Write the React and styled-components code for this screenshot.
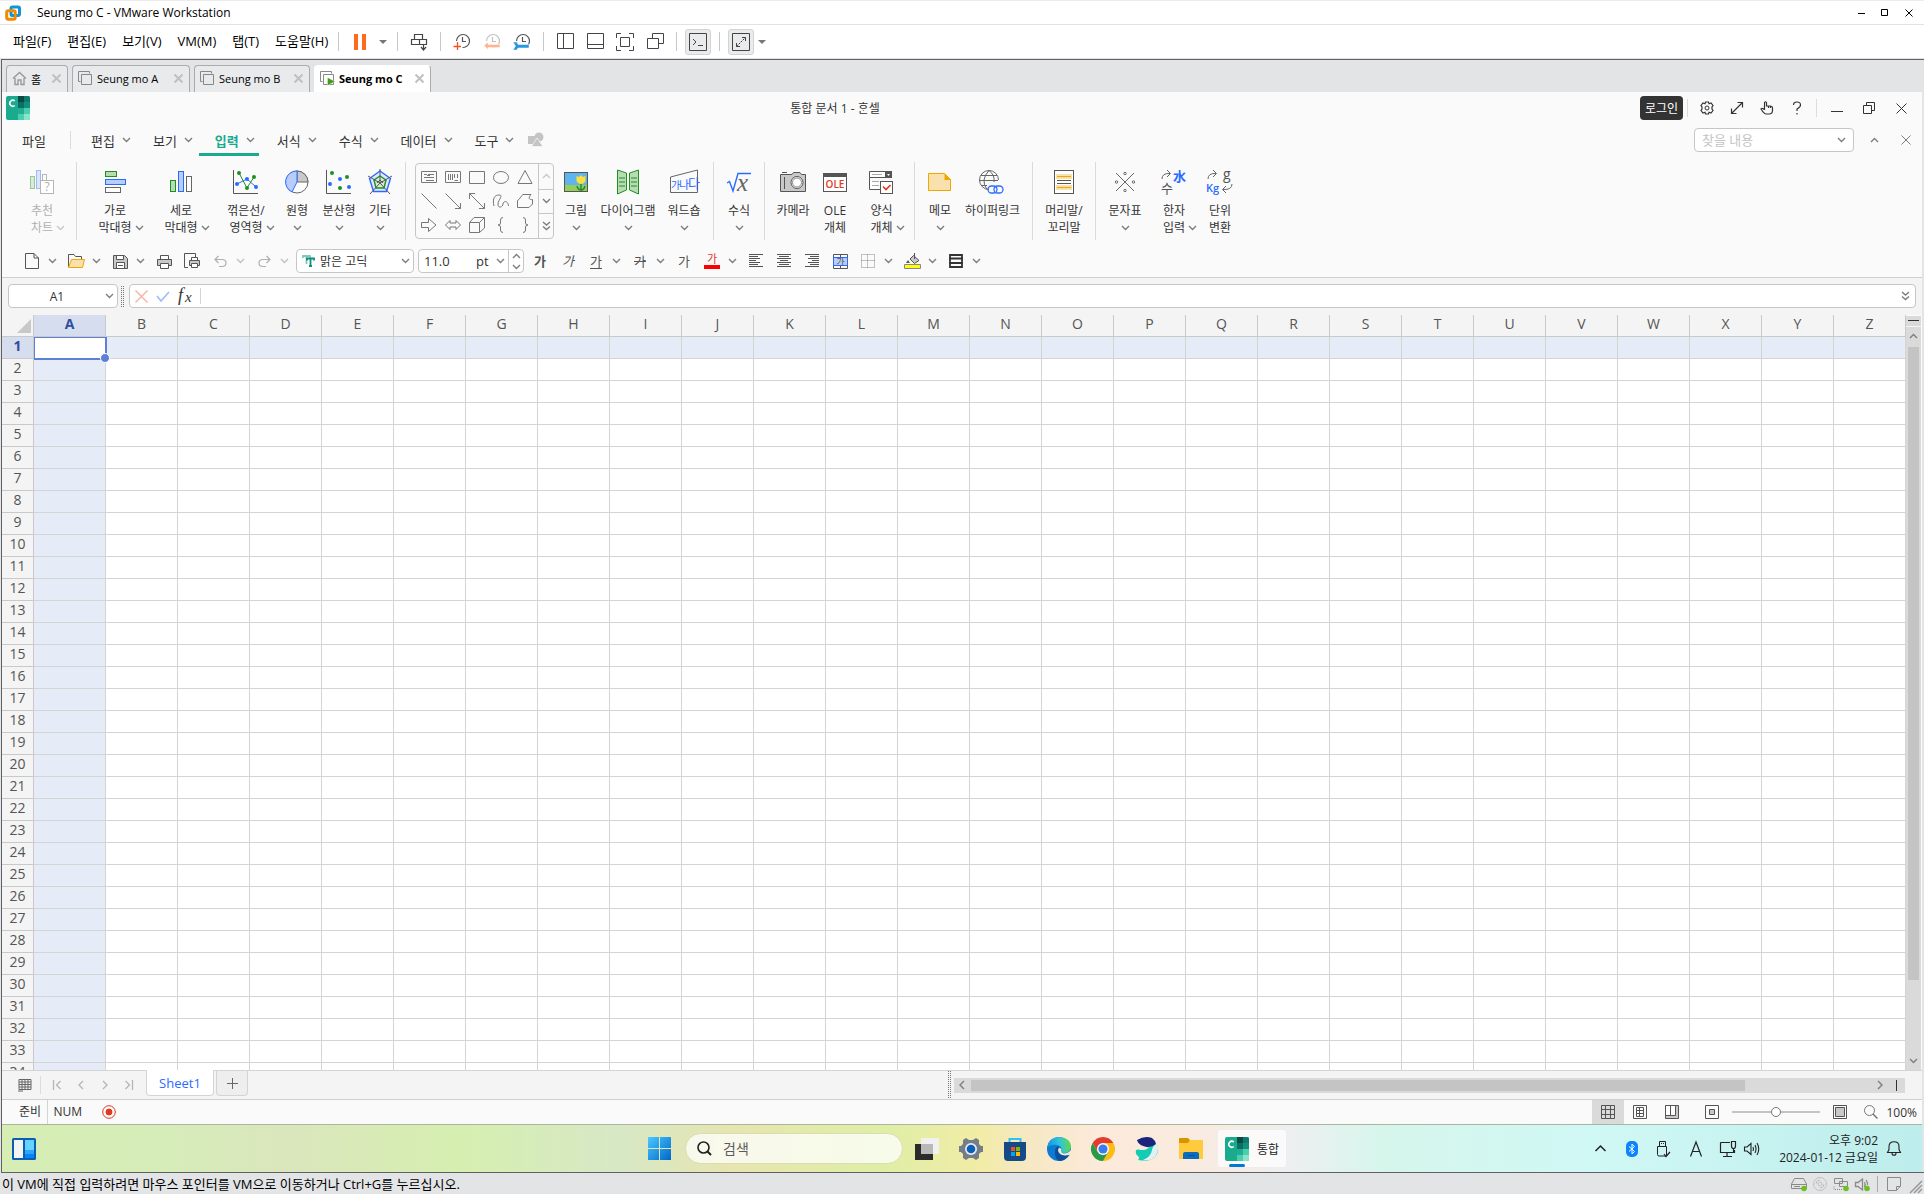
import styled, { createGlobalStyle, css } from 'styled-components'

const GlobalStyle = createGlobalStyle`
  * {
    box-sizing: border-box;
  }

  body {
    margin: 0;
    background: #e3e4e6;
    color: #000;
    font-family: 'Open Sans', 'Noto Sans CJK KR', sans-serif;
    font-size: 12px;
  }

  button,
  input,
  select {
    font: inherit;
    color: inherit;
    margin: 0;
    padding: 0;
    border: none;
    background: transparent;
    outline: none;
  }

  button {
    display: flex;
    align-items: center;
    justify-content: center;
  }
`

/* ---------- shared pieces ---------- */

const Svg = styled.svg`
  display: block;
  flex: none;
  overflow: visible;

  text {
    stroke: none;
    fill: currentColor;
  }
`

const Icon = ({ w = 16, h = w, children, ...rest }) => (
  <Svg width={w} height={h} viewBox={`0 0 ${w} ${h}`} fill="none" stroke="currentColor" aria-hidden="true" {...rest}>
    {children}
  </Svg>
)

const Chevron = ({ up, color = '#7d7d7d' }) => (
  <Icon w={9} h={6} color={color}>
    <path d={up ? 'M1 5L4.500 1.500L8 5' : 'M1 1L4.500 4.500L8 1'} strokeWidth="1.400" />
  </Icon>
)

const DoubleChevron = () => (
  <Icon w={9} h={10} color="#7d7d7d">
    <path d="M1 1L4.500 4L8 1M1 5.500L4.500 8.500L8 5.500" strokeWidth="1.400" />
  </Icon>
)

const Caret = () => (
  <Icon w={8} h={4}>
    <path d="M0 0H8L4 4Z" fill="#777" stroke="none" />
  </Icon>
)

const Cross = ({ size = 10, color = '#333', weight = 1 }) => (
  <Icon w={size} color={color}>
    <path d={`M.5 .5L${size - 0.5} ${size - 0.5}M${size - 0.5} .5L.5 ${size - 0.5}`} strokeWidth={weight} />
  </Icon>
)

const Spacer = styled.div`
  flex: 1;
`

const Screen = styled.div`
  display: flex;
  flex-direction: column;
  height: 100vh;
  overflow: hidden;
`

/* ---------- VMware window ---------- */

const TitleBar = styled.header`
  display: flex;
  align-items: center;
  height: 25px;
  padding: 0 3px 0 5px;
  background: #fff;
  border-top: 1px solid #ececec;
  border-bottom: 1px solid #e2e2e2;
`

const WindowTitle = styled.h1`
  flex: 1;
  margin: 0 0 0 16px;
  font-size: 12px;
  font-weight: 400;
`

const CaptionButton = styled.button`
  width: ${(props) => props.$width || 24}px;
  height: 24px;
`

const VmToolbar = styled.nav`
  display: flex;
  align-items: center;
  height: 34px;
  padding-left: 5px;
  background: #fff;
  border-bottom: 1px solid #e2e2e2;
`

const VmMenus = styled.div`
  display: flex;
  flex: none;
  width: 334px;
  border-right: 1px solid #c8c8c8;
  margin-right: 6px;
  font-size: 13px;
`

const VmMenu = styled.button`
  padding: 0 8px;
  line-height: 19px;
  white-space: nowrap;
`

const VmButton = styled.button`
  width: ${(props) => props.$width || 30}px;
  height: 28px;
  color: #444;
`

const Pressed = styled.span`
  display: flex;
  align-items: center;
  justify-content: center;
  width: 26px;
  height: 26px;
  background: #eaebec;
  border: 1px solid #d3d3d3;
  border-radius: 3px;
`

const VmSeparator = styled.span`
  width: 1px;
  height: 19px;
  margin: 0 6px;
  background: #c8c8c8;
`

const Frame = styled.main`
  display: flex;
  flex-direction: column;
  flex: 1;
  min-height: 0;
  margin-left: 1px;
  border: 1px solid #5f6165;
  border-right: none;
`

const VmTabs = styled.div`
  display: flex;
  align-items: flex-end;
  gap: 4px;
  flex: none;
  height: 32px;
  padding-left: 4px;
  background: #e3e4e6;
`

const VmTab = styled.button`
  justify-content: flex-start;
  gap: 4px;
  width: ${(props) => props.$width}px;
  height: 27px;
  padding: 0 6px 1px 5px;
  font-size: 11px;
  background: #e9eaec;
  border: 1px solid #a9abae;
  border-bottom: none;
  border-radius: 4px 4px 0 0;

  span {
    flex: 1;
    text-align: left;
    white-space: nowrap;
  }

  ${(props) =>
    props.$active &&
    css`
      font-weight: 700;
      background: #fff;
      border-color: #fff #a9abae #fff #fff;
    `}
`

const Guest = styled.div`
  display: flex;
  flex-direction: column;
  flex: 1;
  min-height: 0;
  margin-right: 2px;
  background: #fafafa;
  color: #333;
`

const VmStatus = styled.footer`
  display: flex;
  align-items: center;
  flex: none;
  height: 21px;
  padding: 0 2px;
  background: #e3e4e6;
  color: #000;
  font-size: 13px;
`

const VmStatusIcon = styled.button`
  width: 21px;
  height: 20px;
  color: #8a8a8a;
`

const StatusLine = styled.span`
  width: 1px;
  height: 16px;
  margin: 0 5px;
  background: #aaa;
`

/* ---------- Hancell ---------- */

const AppTitle = styled.div`
  display: flex;
  align-items: center;
  flex: none;
  height: 32px;
  padding: 0 5px 0 4px;
`

const DocumentName = styled.h2`
  flex: 1;
  margin: 0;
  font-size: 12px;
  font-weight: 400;
  text-align: center;
`

const LoginButton = styled.button`
  width: 43px;
  height: 24px;
  border-radius: 4px;
  background: #333;
  color: #fff;
`

const Divider = styled.span`
  flex: none;
  width: 1px;
  height: 18px;
  margin: 0 4px;
  background: #dcdcdc;
`

const MenuRow = styled.nav`
  display: flex;
  align-items: center;
  flex: none;
  height: 32px;
  margin-bottom: 4px;
  padding-right: 4px;
  font-size: 13px;
`

const FileMenu = styled.button`
  width: 64px;
`

const MenuTab = styled.button`
  gap: 7px;
  height: 32px;
  margin-right: 2px;
  padding: 0 4px 0 16px;
  white-space: nowrap;
  border: solid transparent;
  border-width: 3px 0;

  ${(props) =>
    props.$active &&
    css`
      font-weight: 700;
      color: #1aab8f;
      border-bottom-color: #1aab8f;
    `}
`

const Field = styled.div`
  display: flex;
  align-items: center;
  flex: ${(props) => (props.$width ? 'none' : '1')};
  width: ${(props) => (props.$width ? `${props.$width}px` : 'auto')};
  height: 24px;
  background: #fff;
  border: 1px solid #c6c6c6;
  border-radius: 4px;
  overflow: hidden;

  input,
  select {
    flex: 1;
    min-width: 0;
    height: 100%;
    appearance: none;
  }

  input::placeholder {
    color: #c4c4c4;
    opacity: 1;
  }
`

const FindField = styled(Field)`
  padding: 0 7px;
`

const Ribbon = styled.section`
  display: flex;
  flex: none;
  height: 81px;
  padding: 2px 6px 0;
`

const Group = styled.div`
  display: flex;
  flex: none;
  height: 78px;
  padding: 0 6px;
  border-right: 1px solid ${(props) => (props.$last ? 'transparent' : '#dadada')};
`

const Tool = styled.button`
  flex-direction: column;
  justify-content: flex-start;
  width: ${(props) => props.$width}px;
  padding-top: 6px;
  line-height: 17px;
  white-space: nowrap;
  color: ${(props) => (props.$dim ? '#b0b0b0' : '#333')};
`

const ToolIcon = styled.span`
  display: flex;
  justify-content: center;
  height: 34px;
`

const SecondLine = styled.span`
  position: relative;
  display: flex;
  align-items: center;
  justify-content: center;
  height: 17px;
`

// the arrow hangs off the label, the label itself stays centred
const HangingArrow = styled.span`
  position: absolute;
  left: 100%;
  margin-left: 3px;
`

const Gallery = styled.div`
  display: flex;
  width: 139px;
  height: 76px;
  margin: 1px 3px 0;
  border: 1px solid #c6c6c6;
  border-radius: 4px;
  color: #777;
`

const Shapes = styled.div`
  display: grid;
  grid-template-columns: repeat(5, 24px);
  grid-auto-rows: 24px;
  padding: 1px 0 0 1px;
`

const GalleryScroll = styled.div`
  display: grid;
  flex: 1;
  grid-template-rows: repeat(3, 1fr);
  margin-left: 1px;
  border-left: 1px solid #c6c6c6;

  button + button {
    border-top: 1px solid #c6c6c6;
  }
`

const QuickBar = styled.section`
  display: flex;
  align-items: center;
  flex: none;
  height: 37px;
  padding: 4px 0 0 16px;
  border-bottom: 1px solid #cfcfcf;
`

const QuickButton = styled.button`
  width: 28px;
  height: 24px;
  color: #555;
`

const Split = styled.div`
  display: flex;
  margin-right: 4px;
  opacity: ${(props) => (props.$dim ? 0.45 : 1)};
`

const SplitArrow = styled.button`
  width: 12px;
  height: 24px;
`

const FontField = styled(Field)`
  gap: 5px;
  margin: 0 4px 0 2px;
  padding: 0 3px 0 5px;
`

const SizeField = styled(Field)`
  margin-right: 2px;
  padding-left: 5px;

  input {
    font-size: 13px;
  }

  select {
    flex: none;
    width: 20px;
    font-size: 13px;
  }
`

const Spinner = styled.div`
  display: flex;
  flex-direction: column;
  height: 100%;
  width: 15px;
  margin-left: 3px;
  border-left: 1px solid #c6c6c6;

  button {
    flex: 1;
  }
`

const Letter = styled.span`
  font-size: 13px;
  line-height: 14px;
  font-weight: ${(props) => (props.$bold ? 700 : 400)};
  font-style: ${(props) => (props.$italic ? 'italic' : 'normal')};
  text-decoration: ${(props) => (props.$strike ? 'line-through' : 'none')};
  border-bottom: ${(props) => props.$line || '1px solid transparent'};
  color: #555;
`

const FormulaBar = styled.section`
  display: flex;
  align-items: center;
  flex: none;
  height: 37px;
  padding: 0 6px 1px;
  background: #f4f4f4;
`

const NameField = styled(Field)`
  padding-right: 3px;

  input {
    text-align: center;
  }
`

const Grip = styled.span`
  flex: none;
  width: 4px;
  height: ${(props) => props.$height || 21}px;
  margin: 0 ${(props) => (props.$height ? 2 : 3)}px;
  background-image: radial-gradient(circle at 0.5px 0.5px, #777 0.6px, transparent 0.8px);
  background-size: 2px 2px;
`

const FormulaField = styled(Field)`
  margin-left: 1px;
  padding: 0 5px;
  gap: 8px;
  color: #333;
`

const FormulaMark = styled.span`
  width: 1px;
  height: 16px;
  background: #d5d5d5;
`

const SheetArea = styled.section`
  display: flex;
  flex: 1;
  min-height: 0;
`

const GridClip = styled.div`
  flex: 1;
  min-width: 0;
  overflow: hidden;
  background: #fff;
`

const Grid = styled.table`
  table-layout: fixed;
  width: 1904px;
  border-collapse: separate;
  border-spacing: 0;
  font-size: 14px;
  color: #555;

  th,
  td {
    height: 22px;
    padding: 0;
    line-height: 18px;
    vertical-align: top;
    border: solid #d4d4d4;
    border-width: 0 1px 1px 0;
  }

  th {
    font-weight: 400;
    background: #f4f4f4;
    border-color: #c9c9c9;
  }
`

const CornerCell = styled.th`
  width: 32px;

  svg {
    margin: 4px 2px 0 auto;
  }
`

const HeadCell = styled.th`
  ${(props) =>
    props.$active &&
    css`
      && {
        background: #d6ddef;
        color: #2f4f9b;
        font-weight: 700;
      }
    `}
`

const Cell = styled.td`
  position: relative;
  background: ${(props) => (props.$shaded ? '#e5ebf7' : '#fff')};
`

const CellCursor = styled.span`
  position: absolute;
  z-index: 1;
  inset: 0 -2px -2px 0;
  border: solid #5d7fd6;
  border-width: 1px 2px 2px 1px;

  &::after {
    content: '';
    position: absolute;
    right: -5px;
    bottom: -5px;
    width: 8px;
    height: 8px;
    border: 1px solid #fff;
    border-radius: 50%;
    background: #5d7fd6;
  }
`

const VerticalScroll = styled.div`
  display: flex;
  flex-direction: column;
  flex: none;
  width: 15px;
  margin: 1px 1px 0 0;
  background: #dadada;

  button {
    flex: none;
    height: 18px;
  }
`

const PaneSplit = styled.button`
  && {
    height: 11px;
    border-bottom: 1px solid #f4f4f4;
  }
`

const VerticalTrack = styled.div`
  flex: 1;
  padding: 2px;

  &::before {
    content: '';
    display: block;
    height: 90%;
    background: #c4c4c4;
  }
`

const SheetBar = styled.div`
  display: flex;
  align-items: center;
  flex: none;
  height: 30px;
  padding-right: 17px;
  background: #f4f4f4;
  border-top: 1px solid #d4d4d4;
  border-bottom: 1px solid #cfcfcf;
`

const SheetStrip = styled.div`
  display: flex;
  align-items: center;
  flex: 0 0 49.6%;
  height: 28px;
  padding-left: 16px;
`

const SheetList = styled.button`
  width: 14px;
  height: 24px;
  margin-right: 4px;
`

const SheetNav = styled.button`
  width: 24px;
  height: 24px;
  color: #b5b5b5;
`

const SheetTab = styled.button`
  align-self: flex-start;
  width: ${(props) => (props.$add ? 32 : 68)}px;
  height: ${(props) => (props.$add ? 25 : 26)}px;
  margin: ${(props) => (props.$add ? '0 0 0 2px' : '-1px 0 0 5px')};
  font-size: 13px;
  color: ${(props) => (props.$add ? '#666' : '#2a6bff')};
  background: ${(props) => (props.$add ? '#eee' : '#fff')};
  border: 1px solid #d4d4d4;
  border-top: none;
  border-radius: 0 0 4px 4px;
`

const HorizontalScroll = styled.div`
  display: flex;
  flex: 1;
  height: 15px;
  background: #dadada;

  button {
    flex: none;
    width: 17px;
  }
`

const HorizontalTrack = styled.div`
  flex: 1;
  padding: 2px 0;

  &::before {
    content: '';
    display: block;
    width: 86%;
    height: 11px;
    background: #c4c4c4;
  }
`

const StatusBar = styled.div`
  display: flex;
  align-items: center;
  flex: none;
  height: 25px;
  padding: 0 5px 0 14px;
  border-bottom: 1px solid #a9b79c;
`

const StatusText = styled.span`
  width: ${(props) => props.$width}px;
  line-height: 24px;
  padding-right: 6px;
  text-align: right;
  border-right: ${(props) => (props.$line ? '1px solid #d4d4d4' : 'none')};
`

const ViewButton = styled.button`
  width: ${(props) => props.$width || 32}px;
  height: 24px;
  color: #555;
  background: ${(props) => (props.$active ? '#dadada' : 'transparent')};
`

const ZoomSlider = styled.input`
  width: 88px;
  height: 12px;
  margin: 0 4px;
  appearance: none;

  &::-webkit-slider-runnable-track {
    height: 2px;
    background: #c4c4c4;
  }

  &::-webkit-slider-thumb {
    appearance: none;
    width: 10px;
    height: 10px;
    margin-top: -4px;
    border: 1px solid #777;
    border-radius: 50%;
    background: #fff;
  }
`

const ViewGroup = styled.div`
  display: flex;
  margin-right: 8px;
`

/* ---------- Windows taskbar ---------- */

const Taskbar = styled.div`
  display: grid;
  grid-template-columns: 1fr auto 1fr;
  align-items: center;
  flex: none;
  height: 47px;
  color: #222;
  background: linear-gradient(
    90deg,
    #d6edb4 0%,
    #d6edb9 8%,
    #dae6bc 15%,
    #d6efb0 24%,
    #d7e8c6 32%,
    #e7e5b0 38%,
    #dfeea6 46%,
    #f2eca6 51%,
    #f5e8c0 53%,
    #fceada 57%,
    #f9ebdf 62%,
    #eeeff0 67%,
    #d6f6ec 72%,
    #d0f8f5 83%,
    #bdedec 100%
  );
`

const Pinned = styled.div`
  display: flex;
  align-items: center;
`

const TaskButton = styled.button`
  width: 44px;
  height: 44px;
`

const SearchBox = styled.label`
  display: flex;
  align-items: center;
  gap: 11px;
  width: 218px;
  height: 31px;
  margin: 0 2px 0 4px;
  padding: 0 11px;
  border-radius: 16px;
  border: 1px solid #d9ddb0;
  background: rgba(255, 255, 255, 0.75);

  input {
    flex: 1;
    min-width: 0;
    font-size: 14px;
  }

  input::placeholder {
    color: #5c5c5c;
    opacity: 1;
  }
`

const RunningButton = styled.button`
  position: relative;
  justify-content: flex-start;
  gap: 8px;
  width: 70px;
  height: 39px;
  margin-left: 4px;
  padding-left: 7px;
  border-radius: 4px;
  border: 1px solid rgba(0, 0, 0, 0.05);
  background: rgba(255, 255, 255, 0.7);

  &::after {
    content: '';
    position: absolute;
    left: 11px;
    bottom: 0;
    width: 16px;
    height: 3px;
    border-radius: 2px;
    background: #0078d4;
  }
`

const Tray = styled.div`
  display: flex;
  align-items: center;
  justify-content: flex-end;
  padding-right: 16px;
`

const TrayButton = styled.button`
  width: ${(props) => props.$width || 32}px;
  height: 40px;
`

const Clock = styled.button`
  flex-direction: column;
  align-items: flex-end;
  width: 122px;
  padding-right: 4px;
  line-height: 17px;
  white-space: nowrap;
`

/* ---------- drawings ---------- */

const VmwareLogo = () => (
  <Icon w={16} strokeWidth="3">
    <rect x="6" y="2" width="8.500" height="8.500" rx="1.500" stroke="#0f95d8" />
    <rect x="1.700" y="5.700" width="8.500" height="8.500" rx="1.500" stroke="#f38b00" />
    <path d="M6 7V10.500H9" stroke="#0f95d8" strokeWidth="1.500" />
  </Icon>
)

const HancellLogo = () => (
  <Icon w={24} stroke="none">
    <rect width="24" height="24" rx="2" fill="#1aab8f" />
    <path d="M12 0H18V6H12Z" fill="#084a44" />
    <path d="M18 0H22A2 2 0 0 1 24 2V6H18Z" fill="#0f7a6d" />
    <path d="M12 6H18V12H12Z" fill="#0d6f63" />
    <path d="M18 6H24V12H18Z" fill="#13907c" />
    <path d="M12 12H18V18H12Z" fill="#1fae94" />
    <path d="M18 12H24V18H18Z" fill="#49cfae" />
    <path d="M12 18H18V24H12Z" fill="#49cfae" />
    <path d="M18 18H24V22A2 2 0 0 1 22 24H18Z" fill="#8be3c9" />
    <path d="M8.800 5A3 3 0 1 0 8.800 9.500" stroke="#fff" strokeWidth="1.500" />
  </Icon>
)

const VmScreens = ({ running }) => (
  <Icon w={15} color="#888">
    <path d="M2.500 10.500H.5V.5H11.500V2.500M3.500 3.500H13.500V13.500H3.500Z" />
    {running && <path d="M7.500 6.500L15 10.500L7.500 14.500Z" fill="#3f9c14" stroke="#fff" strokeWidth=".4" />}
  </Icon>
)

const ClockFace = ({ color = '#555', children }) => (
  <Icon w={18}>
    <g stroke={color} strokeWidth="1.200">
      <path d="M3.500 8A6.500 6.500 0 1 1 9.500 14.500" />
      <path d="M9.500 4V8.500H13" />
    </g>
    {children}
  </Icon>
)

const shapeIcons = [
  <path d="M.5 2.500H15.500V13.500H.5ZM3 5.500H6M7 5.500H13M3 8.500H13M5 11.500H13M6 6.500H9" />,
  <path d="M.5 2.500H15.500V13.500H.5ZM3.500 5V11M5.500 5V11M7.500 5V11M9.500 5V9M9.500 11.500H13M12.500 5V9" />,
  <path d="M.5 2.500H15.500V14.500H.5Z" />,
  <ellipse cx="8" cy="8.500" rx="7.500" ry="6" />,
  <path d="M8 1.500L15 14.500H1Z" />,
  <path d="M.5 .5L15.500 15.500" />,
  <path d="M.5 .5L15.500 15.500M15.500 10V15.500H10" />,
  <path d="M.5 .5L15.500 15.500M15.500 10V15.500H10M.5 6V.5H6" />,
  <path d="M1 13C-1 5 2 2 6 2C11 2 5 7 5 11C5 16 10 14 10 11C10 8 15 7 15.500 13" />,
  <path d="M.5 14.500V7.500C3 6.500 4 2.500 6 1.500H14C11 5 12 7 15.500 6.500V11L12 14.500Z" />,
  <path d="M.5 5.500H7.500V1.500L15 8L7.500 14.500V10.500H.5Z" />,
  <path d="M5 3.500L.5 8L5 12.500V10H11V12.500L15.500 8L11 3.500V6H5Z" />,
  <path d="M.5 5.500H10.500V15.500H.5ZM.5 5.500L5 .5H15.500V11L10.500 15.500M10.500 5.500L15.500 .5" />,
  <path d="M10 .5Q7.500 .5 7.500 3V6Q7.500 8 5 8Q7.500 8 7.500 10V13Q7.500 15.500 10 15.500" />,
  <path d="M6 .5Q8.500 .5 8.500 3V6Q8.500 8 11 8Q8.500 8 8.500 10V13Q8.500 15.500 6 15.500" />,
]

const green = { fill: '#b7dbb4', stroke: '#1f8f1f' }
const blue = { fill: '#b9cdfb', stroke: '#2a6bff' }
const gray = { fill: '#fff', stroke: '#666' }

const Dots = ({ at, color }) => at.map(([x, y]) => <circle key={`${x}-${y}`} cx={x} cy={y} r="2" fill={color} stroke="none" />)

const drawings = {
  recommend: (
    <g>
      <g opacity=".45">
        <rect x="2.500" y="8.500" width="4" height="12" {...green} />
        <rect x="8.500" y="2.500" width="4" height="18" {...blue} />
        <rect x="14.500" y="6.500" width="4" height="12" {...gray} />
      </g>
      <rect x="12.500" y="12.500" width="13" height="13" fill="#fff" stroke="#b5b5b5" />
      <text x="19" y="23" fontSize="12" textAnchor="middle">?</text>
    </g>
  ),
  bars: (
    <g>
      <rect x="4.500" y="3.500" width="11" height="5" {...green} />
      <rect x="4.500" y="11.500" width="20" height="5" {...blue} />
      <rect x="4.500" y="19.500" width="15" height="5" {...gray} />
    </g>
  ),
  columns: (
    <g>
      <rect x="3.500" y="12.500" width="5" height="11" {...green} />
      <rect x="11.500" y="3.500" width="5" height="20" {...blue} />
      <rect x="19.500" y="8.500" width="5" height="15" {...gray} />
    </g>
  ),
  lines: (
    <g>
      <path d="M1.500 2V25.500H26" stroke="#555" />
      <path d="M5 16L15 11L24 19" stroke="#2a6bff" />
      <path d="M7 5L15 20L22 9" stroke="#1f8f1f" />
      <Dots at={[[5, 16], [15, 11], [24, 19]]} color="#2a6bff" />
      <Dots at={[[7, 5], [15, 20], [22, 9]]} color="#1f8f1f" />
    </g>
  ),
  pie: (
    <g>
      <circle cx="14" cy="14" r="11" fill="#fff" stroke="#666" />
      <path d="M14 3A11 11 0 0 1 25 14H14Z" fill="#c8c8c8" stroke="#666" />
      <path d="M14 3A11 11 0 0 0 9 24L14 14Z" {...blue} />
    </g>
  ),
  scatter: (
    <g>
      <path d="M1.500 2V25.500H26" stroke="#555" />
      <Dots at={[[7, 5], [22, 9], [15, 20]]} color="#1f8f1f" />
      <Dots at={[[15, 11], [5, 16], [24, 19]]} color="#2a6bff" />
    </g>
  ),
  radar: (
    <g>
      <path d="M14 3L24.500 10.500L20.500 23.500H7.500L3.500 10.500Z" fill="#dce6ff" stroke="#2a6bff" strokeWidth="1.400" />
      <path d="M14 8L20 12L18 20H10L8 12Z" fill="#d5ecd3" stroke="#1f8f1f" strokeWidth="1.400" />
      <path d="M14 1V15M14 15L2 8M14 15L26 8M14 15L4 26M14 15L24 26M11 15L14 12L17 15" stroke="#555" />
    </g>
  ),
  picture: (
    <g>
      <rect x="2.500" y="4.500" width="23" height="19" fill="#5fb4f0" stroke="#555" />
      <path d="M3 17H25V23H3Z" fill="#93cf5a" stroke="none" />
      <path d="M19 15V23M19 22Q16 22 15 18M19 22Q22 22 23 18" stroke="#2d8a2d" strokeWidth="1.500" />
      <path d="M14.500 8L17 9L19 7L21 9L23.500 8V13Q22 16 19 16Q16 16 14.500 13Z" fill="#ffdf3f" stroke="none" />
    </g>
  ),
  diagram: (
    <g stroke="#1f8f1f" fill="#b7dbb4">
      <path d="M3.500 2L12.500 5V22L3.500 26Z" />
      <path d="M24.500 2L15.500 5V22L24.500 26Z" />
      <path d="M5 10H11M5 14H11M5 18H11M17 10H23M17 14H23M17 18H23" />
    </g>
  ),
  wordart: (
    <g>
      <path d="M.5 9L27.500 2V24.500H.5Z" stroke="#666" />
      <text x="1" y="21" fontSize="10" style={{ fill: '#2a6bff' }}>가</text>
      <text x="9" y="21" fontSize="11" style={{ fill: '#2a6bff' }}>나</text>
      <text x="18" y="20" fontSize="13" style={{ fill: '#2a6bff' }}>다</text>
    </g>
  ),
  formula: (
    <g>
      <path d="M2 15L4.500 13.500L8 23L13 5.500H26" stroke="#2a6bff" strokeWidth="1.400" />
      <text x="12" y="23" fontSize="25" fontStyle="italic" fontFamily="Liberation Serif" style={{ fill: '#666' }}>x</text>
    </g>
  ),
  camera: (
    <g>
      <path d="M1.500 6.500H13L14.500 4.500H21L22.500 6.500H26.500V23.500H1.500Z" fill="#c8c8c8" stroke="#555" />
      <path d="M3 4.500H8M5.500 9V21" stroke="#555" />
      <circle cx="18" cy="14.500" r="6" fill="#fff" stroke="#555" />
      <circle cx="18" cy="14.500" r="4.500" stroke="#888" />
    </g>
  ),
  ole: (
    <g>
      <rect x="2.500" y="5.500" width="23" height="18" fill="#fff" stroke="#555" />
      <path d="M2 5H26V9H2Z" fill="#555" stroke="none" />
      <text x="14" y="20" fontSize="10" fontWeight="600" textAnchor="middle" style={{ fill: '#e2371f' }}>OLE</text>
    </g>
  ),
  form: (
    <g>
      <path d="M1.500 3.500H23.500V9.500H1.500ZM1.500 9.500V21.500H12" fill="#fff" stroke="#555" />
      <path d="M17 3H24V10H17Z" fill="#555" stroke="none" />
      <path d="M19 6H22L20.500 8Z" fill="#fff" stroke="none" />
      <path d="M4 6.500H14M4 13.500H11M4 17.500H11" stroke="#aaa" />
      <rect x="12.500" y="13.500" width="12" height="12" fill="#fff" stroke="#555" />
      <path d="M15 18.500L18 21.500L22.500 17" stroke="#e2371f" strokeWidth="1.600" />
    </g>
  ),
  memo: (
    <g>
      <path d="M2.500 5.500H18.500L24.500 11.500V22.500H2.500Z" fill="#f8e1ad" stroke="#f0a800" />
      <path d="M18.500 5L25 12H18.500Z" fill="#f0a800" stroke="none" />
    </g>
  ),
  link: (
    <g>
      <g stroke="#666">
        <path d="M10 21.500A9.500 9.500 0 1 1 19.500 12" />
        <path d="M10 2.500Q1 12 8 21.500M10 2.500Q16 7 15 14M2 7.500H18M.5 12.500H19M2 17.500H8" />
      </g>
      <rect x="9" y="18" width="9" height="7" rx="3.500" stroke="#2a6bff" strokeWidth="1.300" />
      <rect x="15" y="18" width="9" height="7" rx="3.500" stroke="#2a6bff" strokeWidth="1.300" />
    </g>
  ),
  header: (
    <g>
      <rect x="4.500" y="2.500" width="19" height="23" fill="#fff" stroke="#555" />
      <path d="M6 6H22V11H6ZM6 17H22V22H6Z" fill="#f8e1ad" stroke="none" />
      <path d="M7 8.500H21M7 19.500H21" stroke="#f0a800" />
      <path d="M7 12.500H21M7 15.500H21" stroke="#555" />
    </g>
  ),
  symbols: (
    <g stroke="#666">
      <path d="M5 5L23 23M23 5L5 23" />
      <circle cx="14" cy="5.500" r="1.200" />
      <circle cx="14" cy="22.500" r="1.200" />
      <circle cx="5.500" cy="14" r="1.200" />
      <circle cx="22.500" cy="14" r="1.200" />
    </g>
  ),
  hanja: (
    <g>
      <path d="M2 11Q2 5 10 5.500M7 2L10.500 5.500L7 9" stroke="#666" />
      <text x="13" y="13" fontSize="13" fontWeight="700" style={{ fill: '#2a6bff' }}>水</text>
      <text x="1" y="25" fontSize="13" style={{ fill: '#555' }}>수</text>
    </g>
  ),
  unit: (
    <g>
      <path d="M2 11Q2 5 10 5.500M7 2L10.500 5.500L7 9" stroke="#666" />
      <text x="17" y="11" fontSize="14" style={{ fill: '#555' }}>g</text>
      <text x="0" y="24" fontSize="11" fontWeight="600" style={{ fill: '#2a6bff' }}>Kg</text>
      <path d="M26 16Q26 22 17 21.500M20 18L16.500 21.500L20 25" stroke="#666" />
    </g>
  ),
}

const ribbonGroups = [
  [{ art: 'recommend', top: '추천', bottom: '차트', arrow: true, width: 56, dim: true }],
  [
    { art: 'bars', top: '가로', bottom: '막대형', arrow: true, width: 64 },
    { art: 'columns', top: '세로', bottom: '막대형', arrow: true, width: 68 },
    { art: 'lines', top: '꺾은선/', bottom: '영역형', arrow: true, width: 62 },
    { art: 'pie', top: '원형', arrow: true, width: 40 },
    { art: 'scatter', top: '분산형', arrow: true, width: 44 },
    { art: 'radar', top: '기타', arrow: true, width: 38 },
  ],
  [
    { gallery: true },
    { art: 'picture', top: '그림', arrow: true, width: 38 },
    { art: 'diagram', top: '다이어그램', arrow: true, width: 66 },
    { art: 'wordart', top: '워드숍', arrow: true, width: 46 },
  ],
  [{ art: 'formula', top: '수식', arrow: true, width: 38 }],
  [
    { art: 'camera', top: '카메라', width: 44 },
    { art: 'ole', top: 'OLE', bottom: '개체', width: 40 },
    { art: 'form', top: '양식', bottom: '개체', arrow: true, width: 53 },
  ],
  [
    { art: 'memo', top: '메모', arrow: true, width: 38 },
    { art: 'link', top: '하이퍼링크', width: 67 },
  ],
  [{ art: 'header', top: '머리말/', bottom: '꼬리말', width: 50 }],
  [
    { art: 'symbols', top: '문자표', arrow: true, width: 46 },
    { art: 'hanja', top: '한자', bottom: '입력', arrow: true, width: 52 },
    { art: 'unit', top: '단위', bottom: '변환', width: 40 },
  ],
]

const menuTabs = ['편집', '보기', '입력', '서식', '수식', '데이터', '도구']
const vmMenus = ['파일(F)', '편집(E)', '보기(V)', 'VM(M)', '탭(T)', '도움말(H)']
const columns = 'ABCDEFGHIJKLMNOPQRSTUVWXYZ'.split('')
const rows = Array.from({ length: 34 }, (_, i) => i + 1)

/* ---------- sections ---------- */

const VmTop = () => (
  <>
    <TitleBar>
      <VmwareLogo />
      <WindowTitle>Seung mo C - VMware Workstation</WindowTitle>
      <CaptionButton aria-label="최소화">
        <Icon w={8}><path d="M1 4.500H8" /></Icon>
      </CaptionButton>
      <CaptionButton aria-label="최대화">
        <Icon w={8}><path d="M.5 .5H6.500V6.500H.5Z" /></Icon>
      </CaptionButton>
      <CaptionButton aria-label="닫기"><Cross size={8} color="#000" /></CaptionButton>
    </TitleBar>
    <VmToolbar>
      <VmMenus>
        {vmMenus.map((name) => <VmMenu key={name}>{name}</VmMenu>)}
      </VmMenus>
      <VmButton aria-label="일시 중단">
        <Icon w={16}><path d="M2 0H6V16H2ZM10 0H14V16H10Z" fill="#ff6a1f" stroke="none" /></Icon>
      </VmButton>
      <VmButton $width={16} aria-label="전원"><Caret /></VmButton>
      <VmSeparator />
      <VmButton aria-label="Ctrl+Alt+Del">
        <Icon w={18}><path d="M4.500 1.500H12.500V6.500H4.500ZM1.500 6.500H9.500V11.500H1.500ZM9.500 6.500H16.500V11.500H9.500ZM13.500 11V17M11 14L13.500 17L16 14" strokeWidth="1.200" /></Icon>
      </VmButton>
      <VmSeparator />
      <VmButton aria-label="스냅샷 생성">
        <ClockFace><path d="M4.500 9V17M.5 13.500H8" stroke="#f4511e" strokeWidth="1.300" /></ClockFace>
      </VmButton>
      <VmButton aria-label="스냅샷 복원">
        <ClockFace color="#c2c2c2"><path d="M1 12.500L5 9V11.500H17V14.500H5V16.500Z" fill="#ffb28c" stroke="#fff" strokeWidth=".5" /></ClockFace>
      </VmButton>
      <VmButton aria-label="스냅샷 관리">
        <ClockFace>
          <path d="M0 9H4L5 11.500H16V15H5L4 17H0L2.500 13Z" fill="#2997e0" stroke="#fff" strokeWidth=".5" />
        </ClockFace>
      </VmButton>
      <VmSeparator />
      <VmButton aria-label="라이브러리">
        <Icon w={17}><path d="M.5 .5H16.500V15.500H.5ZM6.500 .5V15.500" /></Icon>
      </VmButton>
      <VmButton aria-label="축소판">
        <Icon w={17}><path d="M.5 .5H16.500V15.500H.5ZM.5 11.500H16.500" /></Icon>
      </VmButton>
      <VmButton aria-label="전체 화면">
        <Icon w={18}><path d="M.5 5V.5H5M13 .5H17.500V5M17.500 13V17.500H13M5 17.500H.5V13M4.500 4.500H13.500V13.500H4.500Z" /></Icon>
      </VmButton>
      <VmButton aria-label="Unity">
        <Icon w={17}><path d="M5.500 5.500V.5H16.500V10.500H11.500M.5 5.500H11.500V15.500H.5Z" /></Icon>
      </VmButton>
      <VmSeparator />
      <VmButton aria-label="콘솔 보기">
        <Pressed>
          <Icon w={18}><path d="M.5 .5H17.500V17.500H.5ZM4 6L7 9L4 12M9 12.500H14" /></Icon>
        </Pressed>
      </VmButton>
      <VmSeparator />
      <VmButton aria-label="게스트 늘이기">
        <Pressed>
          <Icon w={18}><path d="M.5 .5H17.500V17.500H.5ZM10 4.500H13.500V8M8 13.500H4.500V10" /><path d="M4.500 13.500L13.500 4.500" strokeDasharray="2 1" /></Icon>
        </Pressed>
      </VmButton>
      <VmButton $width={12} aria-label="늘이기 옵션"><Caret /></VmButton>
    </VmToolbar>
  </>
)

const closeMark = <Cross size={9} color="#c0c0c0" weight={2} />

const MachineTabs = () => (
  <VmTabs role="tablist">
    <VmTab role="tab" $width={62}>
      <Icon w={15} color="#999">
        <path d="M1 7.500L7.500 1.500L14 7.500M3 7V13.500H6V9H9V13.500H12V7" strokeWidth="1.400" />
      </Icon>
      <span>홈</span>
      {closeMark}
    </VmTab>
    <VmTab role="tab" $width={118}><VmScreens /><span>Seung mo A</span>{closeMark}</VmTab>
    <VmTab role="tab" $width={116}><VmScreens /><span>Seung mo B</span>{closeMark}</VmTab>
    <VmTab role="tab" $width={117} $active aria-selected="true"><VmScreens running /><span>Seung mo C</span>{closeMark}</VmTab>
  </VmTabs>
)

const CellTitle = () => (
  <AppTitle>
    <HancellLogo />
    <DocumentName>통합 문서 1 - ᄒᆞᆫ셀</DocumentName>
    <LoginButton>로그인</LoginButton>
    <Divider />
    <CaptionButton $width={30} aria-label="환경 설정">
      <Icon w={14}>
        <path d="M5.500 1H8.500L9 2.800L11 2L13 4.500L12 6V8L13 9.500L11 12L9 11.200L8.500 13H5.500L5 11.200L3 12L1 9.500L2 8V6L1 4.500L3 2L5 2.800Z" strokeWidth="1.200" />
        <circle cx="7" cy="7" r="2" />
      </Icon>
    </CaptionButton>
    <CaptionButton $width={30} aria-label="전체 화면">
      <Icon w={12}><path d="M1 11L11 1M6.500 .5H11.500V5.500M.5 6.500V11.500H5.500" strokeWidth="1.200" /></Icon>
    </CaptionButton>
    <CaptionButton $width={30} aria-label="터치">
      <Icon w={14}><path d="M4.500 9V1.500Q5.500 0 6.500 1.500V5H10Q12.500 5 12.500 7V9.500Q12.500 13 9 13H6.500Q4 13 1 8Q3 6.500 4.500 9M8.500 5V7M10.500 5V7" strokeWidth="1.200" /></Icon>
    </CaptionButton>
    <CaptionButton $width={30} aria-label="도움말">
      <Icon w={10} h={14}><path d="M1.500 4Q1.500 1 5 1Q8.500 1 8.500 4Q8.500 6 5 8V10M5 12V13.500" strokeWidth="1.200" /></Icon>
    </CaptionButton>
    <Divider />
    <CaptionButton $width={32} aria-label="최소화">
      <Icon w={12}><path d="M0 9.500H12" /></Icon>
    </CaptionButton>
    <CaptionButton $width={32} aria-label="이전 크기로">
      <Icon w={12}><path d="M.5 3.500H8.500V11.500H.5ZM3.500 3.500V.5H11.500V8.500H8.500" /></Icon>
    </CaptionButton>
    <CaptionButton $width={32} aria-label="닫기"><Cross size={11} color="#333" /></CaptionButton>
  </AppTitle>
)

const CellMenu = () => (
  <MenuRow>
    <FileMenu>파일</FileMenu>
    <Divider />
    {menuTabs.map((name) => (
      <MenuTab key={name} $active={name === '입력'}>
        {name}
        <Chevron />
      </MenuTab>
    ))}
    <CaptionButton $width={32} aria-label="도형">
      <Icon w={16}>
        <path d="M0 4H8V12H0Z" fill="#c4c4c4" stroke="none" />
        <circle cx="11" cy="5" r="4.500" fill="#c4c4c4" stroke="none" />
        <path d="M9 6L15 14.500H3.500Z" fill="#c4c4c4" stroke="#fafafa" strokeWidth=".7" />
      </Icon>
    </CaptionButton>
    <Spacer />
    <FindField $width={160}>
      <input placeholder="찾을 내용" aria-label="찾을 내용" />
      <Chevron />
    </FindField>
    <CaptionButton $width={40} aria-label="메뉴 접기"><Chevron up /></CaptionButton>
    <CaptionButton aria-label="문서 닫기"><Cross size={10} color="#7d7d7d" /></CaptionButton>
  </MenuRow>
)

const ShapeGallery = () => (
  <Gallery>
    <Shapes>
      {shapeIcons.map((shape, i) => (
        <button key={i} aria-label={`도형 ${i + 1}`}>
          <Icon w={16}>{shape}</Icon>
        </button>
      ))}
    </Shapes>
    <GalleryScroll>
      <button aria-label="위로"><Chevron up color="#c8c8c8" /></button>
      <button aria-label="아래로"><Chevron /></button>
      <button aria-label="자세히"><DoubleChevron /></button>
    </GalleryScroll>
  </Gallery>
)

const RibbonTool = ({ art, top, bottom, arrow, width, dim }) => (
  <Tool $width={width} $dim={dim}>
    <ToolIcon><Icon w={28}>{drawings[art]}</Icon></ToolIcon>
    <span>{top}</span>
    <SecondLine>
      {bottom}
      {arrow && !bottom && <Chevron />}
      {arrow && bottom && <HangingArrow><Chevron color={dim ? '#c8c8c8' : '#7d7d7d'} /></HangingArrow>}
    </SecondLine>
  </Tool>
)

const QuickSplit = ({ label, dim, children }) => (
  <Split $dim={dim}>
    <QuickButton aria-label={label}>{children}</QuickButton>
    <SplitArrow aria-label={`${label} 옵션`}><Chevron /></SplitArrow>
  </Split>
)

const AlignIcon = ({ d }) => <Icon w={14}><path d={d} /></Icon>

const QuickTools = () => (
  <QuickBar>
    <QuickSplit label="새 문서">
      <Icon w={14} h={16}><path d="M.5 .5H9L13.500 5V15.500H.5ZM9 .5V5H13.500" /></Icon>
    </QuickSplit>
    <QuickSplit label="불러오기">
      <Icon w={17} h={14}>
        <path d="M.5 13V.5H6L7.500 2.500H13.500V5" />
        <path d="M3.500 5.500H16.500L14.500 13.500H.5Z" fill="#f8e1ad" stroke="#f0a800" />
      </Icon>
    </QuickSplit>
    <QuickSplit label="저장하기">
      <Icon w={15}>
        <path d="M.5 1.500H11.500L14.500 4.500V14.500H.5Z" fill="#c8c8c8" />
        <path d="M3.500 1.500H10.500V5.500H3.500ZM3.500 8.500H11.500V14.500H3.500ZM5 11.500H10" fill="#fff" />
      </Icon>
    </QuickSplit>
    <QuickButton aria-label="인쇄">
      <Icon w={15}>
        <path d="M3.500 1.500H11.500V5.500H3.500Z" fill="#fff" />
        <path d="M.5 5.500H14.500V11.500H.5Z" fill="#c8c8c8" />
        <path d="M3.500 9.500H11.500V14.500H3.500Z" fill="#fff" />
      </Icon>
    </QuickButton>
    <QuickButton aria-label="미리 보기">
      <Icon w={16}>
        <path d="M4 14.500H.5V.5H11.500V4" />
        <path d="M7.500 4.500H13.500V7.500H7.500Z" fill="#fff" />
        <path d="M5.500 7.500H15.500V12.500H5.500Z" fill="#c8c8c8" />
        <path d="M7.500 10.500H13.500V14.500H7.500Z" fill="#fff" />
      </Icon>
    </QuickButton>
    <QuickSplit label="되돌리기" dim>
      <Icon w={13}><path d="M4.500 1L1 4.500L4.500 8M1 4.500H8Q12 4.500 12 8Q12 11.500 8 11.500H5" strokeWidth="1.200" /></Icon>
    </QuickSplit>
    <QuickSplit label="다시 실행" dim>
      <Icon w={13}><path d="M8.500 1L12 4.500L8.500 8M12 4.500H5Q1 4.500 1 8Q1 11.500 5 11.500H8" strokeWidth="1.200" /></Icon>
    </QuickSplit>
    <FontField $width={118}>
      <Icon w={13} h={12}>
        <path d="M1 3V1H8V3M4.500 1V9" stroke="#7fcdb8" strokeWidth="1.800" />
        <path d="M5 5.500V3.500H12V5.500M8.500 3.500V11M7 11H10" stroke="#0f8f7f" strokeWidth="1.800" />
      </Icon>
      <select aria-label="글꼴" defaultValue="맑은 고딕">
        <option>맑은 고딕</option>
      </select>
      <Chevron />
    </FontField>
    <SizeField $width={106}>
      <input aria-label="글자 크기" defaultValue="11.0" />
      <select aria-label="단위" defaultValue="pt">
        <option>pt</option>
      </select>
      <Chevron />
      <Spinner>
        <button aria-label="크게"><Chevron up /></button>
        <button aria-label="작게"><Chevron /></button>
      </Spinner>
    </SizeField>
    <QuickButton aria-label="진하게"><Letter $bold>가</Letter></QuickButton>
    <QuickButton aria-label="기울임"><Letter $italic>가</Letter></QuickButton>
    <QuickSplit label="밑줄"><Letter $line="1px solid #555">가</Letter></QuickSplit>
    <QuickSplit label="취소선"><Letter $strike>가</Letter></QuickSplit>
    <QuickButton aria-label="글자 모양"><Letter>가</Letter></QuickButton>
    <QuickSplit label="글자 색">
      <Icon w={16}>
        <text x="8" y="10" fontSize="11" textAnchor="middle" style={{ fill: '#e2371f' }}>가</text>
        <path d="M0 12H16V16H0Z" fill="#f00" stroke="none" />
      </Icon>
    </QuickSplit>
    <QuickButton aria-label="왼쪽 정렬">
      <AlignIcon d="M0 .5H14M0 2.500H9M0 4.500H11M0 6.500H7M0 8.500H11M0 10.500H9M0 12.500H14" />
    </QuickButton>
    <QuickButton aria-label="가운데 정렬">
      <AlignIcon d="M0 .5H14M2 2.500H12M0 4.500H14M3 6.500H11M0 8.500H14M2 10.500H12M0 12.500H14" />
    </QuickButton>
    <QuickButton aria-label="오른쪽 정렬">
      <AlignIcon d="M0 .5H14M5 2.500H14M3 4.500H14M7 6.500H14M3 8.500H14M5 10.500H14M0 12.500H14" />
    </QuickButton>
    <QuickButton aria-label="병합">
      <Icon w={15}>
        <path d="M.5 .5H14.500V14.500H.5ZM7.500 .5V14.500" />
        <path d="M.5 3.500H14.500V11.500H.5Z" {...blue} />
        <text x="7.500" y="11" fontSize="9" textAnchor="middle">가</text>
      </Icon>
    </QuickButton>
    <QuickSplit label="테두리">
      <Icon w={14} color="#888"><path d="M.5 .5H13.500V13.500H.5ZM6.500 .5V13.500M.5 6.500H13.500" strokeDasharray="1 1" /></Icon>
    </QuickSplit>
    <QuickSplit label="채우기">
      <Icon w={17} h={16}>
        <path d="M9.500 2.500L15 7.500L10.500 10.500L6 6Z" fill="#c8c8c8" />
        <path d="M10.500 0V6" />
        <path d="M4 7L6 10H2Z" fill="#555" stroke="none" />
        <path d="M.5 11.500H16.500V15.500H.5Z" fill="#ff0" stroke="#888" />
      </Icon>
    </QuickSplit>
    <QuickSplit label="줄 모양">
      <Icon w={14} color="#333"><path d="M1 1H13V13H1ZM0 4.500H14M0 9H14" strokeWidth="1.800" /></Icon>
    </QuickSplit>
  </QuickBar>
)

const Formula = () => (
  <FormulaBar>
    <NameField $width={110}>
      <input aria-label="이름 상자" defaultValue="A1" />
      <Chevron />
    </NameField>
    <Grip />
    <FormulaField>
      <Cross size={13} color="#f5b3a6" weight={1.4} />
      <Icon w={14}><path d="M1 7L5 12L13 3" stroke="#9dbcfb" strokeWidth="1.600" /></Icon>
      <Icon w={14} h={16}>
        <text x="0" y="13" fontSize="18" fontStyle="italic" fontFamily="Liberation Serif">f</text>
        <text x="7" y="14" fontSize="15" fontStyle="italic" fontFamily="Liberation Serif">x</text>
      </Icon>
      <FormulaMark />
      <input aria-label="수식 입력줄" />
      <DoubleChevron />
    </FormulaField>
  </FormulaBar>
)

const Sheet = () => (
  <SheetArea>
    <GridClip>
      <Grid>
        <thead>
          <tr>
            <CornerCell aria-label="모두 선택">
              <Icon w={14}><path d="M14 0V14H0Z" fill="#c8c8c8" stroke="none" /></Icon>
            </CornerCell>
            {columns.map((name) => (
              <HeadCell key={name} scope="col" $active={name === 'A'}>{name}</HeadCell>
            ))}
          </tr>
        </thead>
        <tbody>
          {rows.map((row) => (
            <tr key={row}>
              <HeadCell scope="row" $active={row === 1}>{row}</HeadCell>
              {columns.map((name) => {
                const selected = row === 1 && name === 'A'
                return (
                  <Cell key={name} $shaded={!selected && (row === 1 || name === 'A')}>
                    {selected && <CellCursor />}
                  </Cell>
                )
              })}
            </tr>
          ))}
        </tbody>
      </Grid>
    </GridClip>
    <VerticalScroll>
      <PaneSplit aria-label="창 나누기"><Icon w={11} h={2}><path d="M0 .5H11" /></Icon></PaneSplit>
      <button aria-label="위로"><Chevron up /></button>
      <VerticalTrack />
      <button aria-label="아래로"><Chevron /></button>
    </VerticalScroll>
  </SheetArea>
)

const SheetTabs = () => (
  <SheetBar>
    <SheetStrip>
      <SheetList aria-label="시트 목록">
        <Icon w={14} color="#666">
          <path d="M1 1.500H13V11.500H1ZM1 4H13M1 6.500H13M1 9H13M4 1V12M7 1V12M10 1V12M0 13H5" />
        </Icon>
      </SheetList>
      <Divider />
      <SheetNav aria-label="첫 시트"><Icon w={8} h={10}><path d="M.5 0V10M7.500 1L3.500 5L7.500 9" strokeWidth="1.300" /></Icon></SheetNav>
      <SheetNav aria-label="이전 시트"><Icon w={8} h={10}><path d="M6 1L2 5L6 9" strokeWidth="1.300" /></Icon></SheetNav>
      <SheetNav aria-label="다음 시트"><Icon w={8} h={10}><path d="M2 1L6 5L2 9" strokeWidth="1.300" /></Icon></SheetNav>
      <SheetNav aria-label="마지막 시트"><Icon w={8} h={10}><path d="M7.500 0V10M.5 1L4.500 5L.5 9" strokeWidth="1.300" /></Icon></SheetNav>
      <SheetTab>Sheet1</SheetTab>
      <SheetTab $add aria-label="시트 삽입"><Icon w={11}><path d="M5.500 0V11M0 5.500H11" /></Icon></SheetTab>
    </SheetStrip>
    <Grip $height={28} />
    <HorizontalScroll>
      <button aria-label="왼쪽"><Icon w={6} h={10} color="#7d7d7d"><path d="M5 1L1 5L5 9" strokeWidth="1.400" /></Icon></button>
      <HorizontalTrack />
      <button aria-label="오른쪽"><Icon w={6} h={10} color="#7d7d7d"><path d="M1 1L5 5L1 9" strokeWidth="1.400" /></Icon></button>
      <button aria-label="창 나누기"><Icon w={2} h={11}><path d="M.5 0V11" /></Icon></button>
    </HorizontalScroll>
  </SheetBar>
)

const CellStatus = () => (
  <StatusBar>
    <StatusText $width={32} $line>준비</StatusText>
    <StatusText $width={40}>NUM</StatusText>
    <ViewButton $width={42} aria-label="매크로 기록">
      <Icon w={14} color="#e2371f">
        <circle cx="7" cy="7" r="6.300" />
        <circle cx="7" cy="7" r="3" fill="#e2371f" />
      </Icon>
    </ViewButton>
    <Spacer />
    <ViewGroup>
      <ViewButton $active aria-label="기본 보기">
        <Icon w={14}><path d="M.5 .5H13.500V13.500H.5ZM4.500 .5V13.500M9.500 .5V13.500M.5 4.500H13.500M.5 9.500H13.500" /></Icon>
      </ViewButton>
      <ViewButton aria-label="쪽 윤곽">
        <Icon w={14}><path d="M.5 .5H13.500V13.500H.5ZM3.500 2.500H10.500V11.500H3.500ZM6.500 2.500V11.500M3.500 5.500H10.500M3.500 8.500H10.500" /></Icon>
      </ViewButton>
      <ViewButton aria-label="쪽 나누기">
        <Icon w={14}><path d="M.5 .5H13.500V13.500H.5Z" fill="#c8c8c8" /><path d="M.5 .5H10.500V10.500H.5ZM5.500 .5V10.500" fill="#fff" /></Icon>
      </ViewButton>
    </ViewGroup>
    <ViewButton aria-label="선택 영역 확대">
      <Icon w={14}><path d="M.5 .5H13.500V13.500H.5Z" /><path d="M4.500 4.500H9.500V9.500H4.500Z" fill="#c8c8c8" /></Icon>
    </ViewButton>
    <ZoomSlider type="range" min="0" max="100" defaultValue="50" aria-label="확대/축소" />
    <ViewButton aria-label="화면 맞춤">
      <Icon w={14}><path d="M.5 .5H13.500V13.500H.5Z" /><path d="M2.500 2.500H11.500V11.500H2.500Z" fill="#c8c8c8" /></Icon>
    </ViewButton>
    <ViewButton $width={30} aria-label="배율">
      <Icon w={14} color="#777"><circle cx="5.500" cy="5.500" r="5" /><path d="M9 9L13.500 13.500" strokeWidth="1.500" /></Icon>
    </ViewButton>
    <span>100%</span>
  </StatusBar>
)

const WindowsBar = () => (
  <Taskbar>
    <Pinned>
      <TaskButton aria-label="위젯">
        <Icon w={24} h={22} stroke="none">
          <rect width="24" height="22" rx="1.500" fill="#0a5fb4" />
          <path d="M2 2H11V20H2Z" fill="#f4f4f4" />
          <path d="M13 2H22V12H13Z" fill="#66d4ff" />
          <path d="M13 12H22V16H13Z" fill="#2aa6ff" />
          <path d="M13 16H22V20H13Z" fill="#0a84f0" />
        </Icon>
      </TaskButton>
    </Pinned>
    <Pinned>
      <TaskButton aria-label="시작">
        <Icon w={23} stroke="none">
          <defs>
            <linearGradient id="win" x1="0" y1="0" x2="23" y2="23" gradientUnits="userSpaceOnUse">
              <stop stopColor="#4cc8ff" />
              <stop offset="1" stopColor="#0067c8" />
            </linearGradient>
          </defs>
          <path d="M0 0H11V11H0ZM12 0H23V11H12ZM0 12H11V23H0ZM12 12H23V23H12Z" fill="url(#win)" />
        </Icon>
      </TaskButton>
      <SearchBox>
        <Icon w={15} color="#222"><circle cx="6.500" cy="6.500" r="5.500" strokeWidth="1.600" /><path d="M10.500 10.500L14 14" strokeWidth="2" /></Icon>
        <input placeholder="검색" aria-label="검색" />
      </SearchBox>
      <TaskButton aria-label="작업 보기">
        <Icon w={24} h={22} stroke="none">
          <path d="M0 6H18V22H0Z" fill="#2b2b2b" />
          <path d="M6 0H24V16H6Z" fill="#f1f1f1" />
          <path d="M6 6H18V16H6Z" fill="#b9b9b9" />
        </Icon>
      </TaskButton>
      <TaskButton aria-label="설정">
        <Icon w={24} stroke="none">
          <path d="M7 1L10 3H14L17 1L20 3L20 7L22 9H24V15H22L20 17L20 21L17 23L14 21H10L7 23L4 21L4 17L2 15H0V9H2L4 7L4 3Z" fill="#747d88" />
          <circle cx="12" cy="12" r="6" fill="#e8ecf2" />
          <circle cx="12" cy="12" r="4.300" fill="#0a5fb8" />
        </Icon>
      </TaskButton>
      <TaskButton aria-label="Microsoft Store">
        <Icon w={24} stroke="none">
          <path d="M6.500 7V2H17.500V7" stroke="#2fc0f5" strokeWidth="2" />
          <path d="M1 5H23V20Q23 24 19 24H5Q1 24 1 20Z" fill="#164a87" />
          <path d="M8 10H12V14H8Z" fill="#f25022" />
          <path d="M13 10H17V14H13Z" fill="#7fba00" />
          <path d="M8 15H12V19H8Z" fill="#00a4ef" />
          <path d="M13 15H17V19H13Z" fill="#ffb900" />
        </Icon>
      </TaskButton>
      <TaskButton aria-label="Edge">
        <Icon w={24} stroke="none">
          <defs>
            <linearGradient id="edge" x1="0" y1="12" x2="24" y2="8" gradientUnits="userSpaceOnUse">
              <stop stopColor="#1590dd" />
              <stop offset=".55" stopColor="#2fc3df" />
              <stop offset="1" stopColor="#62d948" />
            </linearGradient>
          </defs>
          <circle cx="12" cy="12" r="12" fill="#0d7bd2" />
          <path d="M0 11Q2 0 12 0Q24 1 24 10Q23 16 17 16Q13 16 14.500 13Q15 9 10 8Q4 7 0 11Z" fill="url(#edge)" />
          <path d="M8 14Q8 10 12 9Q8 20 22 18Q18 24 12 24Q7 21 8 14Z" fill="#0c4f9e" />
          <path d="M11 13Q12 9.500 14.500 12.500Q13 16 17 16.500Q21 16.500 24 13L24 17L22 18Q12 20 11 13Z" fill="#f7e9cc" />
        </Icon>
      </TaskButton>
      <TaskButton aria-label="Chrome">
        <Icon w={24} stroke="none">
          <path d="M1.600 6A12 12 0 0 1 22.400 6H12L6.800 15Z" fill="#e33b2e" />
          <path d="M22.400 6A12 12 0 0 1 12 24L17.200 15L12 6Z" fill="#fbbc14" />
          <path d="M12 24A12 12 0 0 1 1.600 6L6.800 15H17.200Z" fill="#2a9a47" />
          <circle cx="12" cy="12" r="6" fill="#fff" />
          <circle cx="12" cy="12" r="4.600" fill="#3b7bf0" />
        </Icon>
      </TaskButton>
      <TaskButton aria-label="Whale">
        <Icon w={24} stroke="none">
          <path d="M1 13Q3 12 6 13Q13 14 18 6Q22 6 23 12Q23 20 15 23Q10 24 3 23Q5 21 3 19Q0 17 1 13Z" fill="#12cdb4" />
          <path d="M2 3Q10 -2 17 1Q20 3 21 7Q15 12 8 9Q3 7 2 3Z" fill="#1c237e" />
          <path d="M23 11Q23 20 15 23H8Q16 20 17 13Q18 8 22 7Z" fill="#e4efef" />
        </Icon>
      </TaskButton>
      <TaskButton aria-label="파일 탐색기">
        <Icon w={24} h={22} stroke="none">
          <path d="M0 1Q0 0 1 0H9L11 2V5H0Z" fill="#d99500" />
          <path d="M0 5H9L11 2H24V21H0Z" fill="#ffcb3d" />
          <path d="M4 21V16Q4 14 6 14H18Q20 14 20 16V21Z" fill="#0a6cbf" />
          <path d="M8 17H16V18H8Z" fill="#064f93" />
        </Icon>
      </TaskButton>
      <RunningButton>
        <HancellLogo />
        통합
      </RunningButton>
    </Pinned>
    <Tray>
      <TrayButton aria-label="숨겨진 아이콘"><Icon w={11} h={7}><path d="M.5 6L5.500 1L10.500 6" strokeWidth="1.500" /></Icon></TrayButton>
      <TrayButton aria-label="Bluetooth">
        <Icon w={12} h={16}>
          <rect width="12" height="16" rx="5" fill="#0a84ff" stroke="none" />
          <path d="M3 5.500L8.500 10.500L6 13V3L8.500 5.500L3 10.500" stroke="#fff" />
        </Icon>
      </TrayButton>
      <TrayButton aria-label="USB">
        <Icon w={14} h={16}><path d="M2.500 5.500V.5H8.500V5.500M.5 5.500H9.500V15H2Q.5 15 .5 13.500ZM4 2.500H5M6 2.500H7" /><path d="M7 13L9 15.500L13 11" strokeWidth="1.200" /></Icon>
      </TrayButton>
      <TrayButton aria-label="입력 방식"><Icon w={12} h={16}><path d="M.5 15.500L6 1L11.500 15.500M2.500 10.500H9.500" strokeWidth="1.200" /></Icon></TrayButton>
      <TrayButton aria-label="네트워크">
        <Icon w={16}><path d="M10 1.500H1.500Q.5 1.500 .5 2.500V11.500H14.500V9M7 11.500V15M3 15.500H12M11.500 .5H15.500V5Q15.500 7.500 13.500 7.500Q11.500 7.500 11.500 5ZM13.500 7.500V11" strokeWidth="1.200" /></Icon>
      </TrayButton>
      <TrayButton $width={16} aria-label="볼륨">
        <Icon w={16} h={14}><path d="M.5 5V9H3L7 12.500V1.500L3 5ZM9 5Q10 7 9 9M11 3Q13 7 11 11M13 1Q16.500 7 13 13" strokeWidth="1.100" /></Icon>
      </TrayButton>
      <Clock>
        <span>오후 9:02</span>
        <span>2024-01-12 금요일</span>
      </Clock>
      <TrayButton $width={24} aria-label="알림">
        <Icon w={14} h={15}><path d="M.5 11.500H13.500L12 8.500V5.500Q12 .8 7 .8Q2 .8 2 5.500V8.500ZM5 12Q5 14.300 7 14.300Q9 14.300 9 12" strokeWidth="1.100" /></Icon>
      </TrayButton>
    </Tray>
  </Taskbar>
)

const Online = () => <circle cx="13" cy="12.500" r="2.800" fill="#6cc024" stroke="none" />

export default function App() {
  return (
    <Screen>
      <GlobalStyle />
      <VmTop />
      <Frame>
        <MachineTabs />
        <Guest>
          <CellTitle />
          <CellMenu />
          <Ribbon>
            {ribbonGroups.map((tools, i) => (
              <Group key={i} $last={i === ribbonGroups.length - 1}>
                {tools.map((tool) =>
                  tool.gallery ? <ShapeGallery key="gallery" /> : <RibbonTool key={tool.art} {...tool} />
                )}
              </Group>
            ))}
          </Ribbon>
          <QuickTools />
          <Formula />
          <Sheet />
          <SheetTabs />
          <CellStatus />
          <WindowsBar />
        </Guest>
      </Frame>
      <VmStatus>
        <span>이 VM에 직접 입력하려면 마우스 포인터를 VM으로 이동하거나 Ctrl+G를 누르십시오.</span>
        <Spacer />
        <VmStatusIcon aria-label="하드 디스크">
          <Icon w={16}><path d="M3.500 2.500H12.500L15.500 8V12.500H.5V8ZM.5 8.500H15.500M3 10.500H9" /><Online /></Icon>
        </VmStatusIcon>
        <VmStatusIcon aria-label="CD/DVD">
          <Icon w={14} color="#c0c0c0"><circle cx="7" cy="7" r="6.500" /><circle cx="7" cy="7" r="2" /><path d="M3 7Q3 3 7 3M11 7Q11 11 7 11" /></Icon>
        </VmStatusIcon>
        <VmStatusIcon aria-label="네트워크 어댑터">
          <Icon w={16}><path d="M1.500 2.500H9.500V7.500H1.500ZM6.500 5.500H14.500V10.500H6.500Z" /><path d="M1 10.500V13.500H10" strokeDasharray="1 1" /><Online /></Icon>
        </VmStatusIcon>
        <VmStatusIcon aria-label="사운드 카드">
          <Icon w={16}><path d="M1.500 6.500V10.500H4L8.500 14V3L4 6.500ZM10.500 6Q12 8.500 10.500 11M12 4Q14 7 13.500 9" strokeWidth="1.300" /><Online /></Icon>
        </VmStatusIcon>
        <StatusLine />
        <VmStatusIcon aria-label="메시지 로그">
          <Icon w={14}><path d="M.5 .5H13.500V9L9.500 13.500H.5ZM9.500 13.500V9.500H13.500" /></Icon>
        </VmStatusIcon>
        <Icon w={18} h={20} color="#999"><path d="M6 19L18 7M10 19L18 11M14 19L18 15" strokeWidth="1.500" /></Icon>
      </VmStatus>
    </Screen>
  )
}
